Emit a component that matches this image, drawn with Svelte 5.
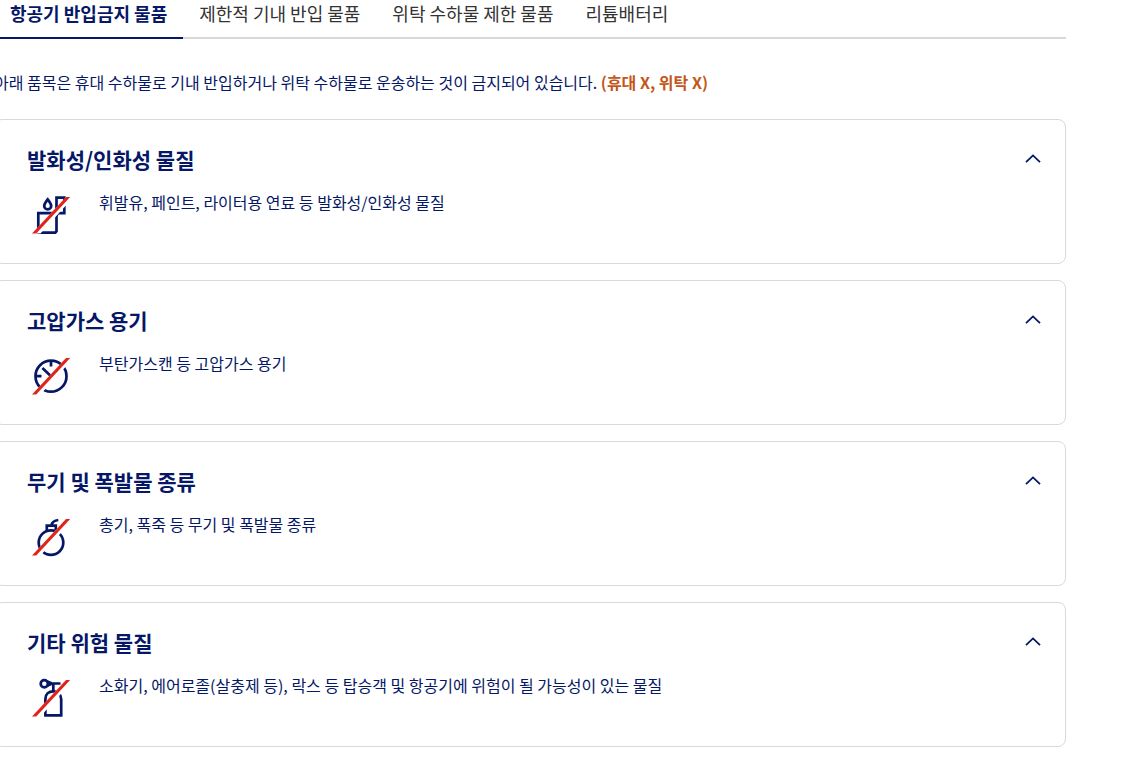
<script lang="ts">
    type Item = {
        id: string
        title: string
        text: string
        isOpen: boolean
    }

    const tabs = ['항공기 반입금지 물품', '제한적 기내 반입 물품', '위탁 수하물 제한 물품', '리튬배터리']

    let selected = 0
    let items: Item[] = [
        { id: 'flammable', title: '발화성/인화성 물질', text: '휘발유, 페인트, 라이터용 연료 등 발화성/인화성 물질', isOpen: true },
        { id: 'gas', title: '고압가스 용기', text: '부탄가스캔 등 고압가스 용기', isOpen: true },
        { id: 'weapon', title: '무기 및 폭발물 종류', text: '총기, 폭죽 등 무기 및 폭발물 종류', isOpen: true },
        { id: 'other', title: '기타 위험 물질', text: '소화기, 에어로졸(살충제 등), 락스 등 탑승객 및 항공기에 위험이 될 가능성이 있는 물질', isOpen: true }
    ]

    function toggle(id: string) {
        items = items.map(item => item.id === id ? { ...item, isOpen: !item.isOpen } : item)
    }
</script>

<main>
    <div class="tabs" role="tablist">
        {#each tabs as tab, index}
            <button type="button" role="tab" class="tab" class:active={index === selected}
                aria-selected={index === selected} on:click={() => selected = index}>{tab}</button>
        {/each}
    </div>
    <p class="intro">
        아래 품목은 휴대 수하물로 기내 반입하거나 위탁 수하물로 운송하는 것이 금지되어 있습니다.
        <strong>(휴대 X, 위탁 X)</strong>
    </p>
    <div class="cards">
        {#each items as { id, title, text, isOpen }}
            <section class="card">
                <h2>
                    <button type="button" class="header" aria-expanded={isOpen} aria-controls={id}
                        on:click={() => toggle(id)}>
                        <span>{title}</span>
                        <svg class="chevron" class:closed={!isOpen} viewBox="0 0 16 16" aria-hidden="true">
                            <path d="M1 10.2 8 3.4l7 6.8" />
                        </svg>
                    </button>
                </h2>
                {#if isOpen}
                    <div class="content" {id}>
                        <svg class="icon" viewBox="0 0 48 48" aria-hidden="true">
                            {#if id === 'flammable'}
                                <path d="M29.5 22.2H11.3v19.4h17l1.2-1.4V6.7h7.8v15.5h-6.5l-1.3 2.6" />
                                <path d="M20.7 8.4c-1.8 2.4-3.5 4.4-3.5 6.5a3.5 3.5 0 0 0 7 0c0-2.1-1.7-4.1-3.5-6.5z" />
                            {:else if id === 'gas'}
                                <circle cx="24" cy="24.2" r="15.5" />
                                <path d="M24 8.5V14.5M8.5 24.2H14.5M15.4 16 24 24.2" />
                            {:else if id === 'weapon'}
                                <circle cx="24" cy="29.6" r="12.3" />
                                <path d="M19.8 18v-5.4h9V18M24.3 12.4c.8-3.2 3-5 7-5.4" />
                            {:else}
                                <circle cx="17.3" cy="9.7" r="3.6" />
                                <path d="M20.3 11.7 25 9.5h8.5M20.3 7.6 25 9.5M26.3 9.5v8" />
                                <path d="M18.4 41.4V25c0-5 3.4-7.6 7.9-7.6s7.9 2.8 7.9 7.8v16.2z" />
                            {/if}
                            <path class="gap" d="M5.2 42.6h8.2L46.6 6h-7.5z" />
                            <path class="slash" d="M5 42.6h4.2L43.2 6H39z" />
                        </svg>
                        <p>{text}</p>
                    </div>
                {/if}
            </section>
        {/each}
    </div>
</main>

<style>
:global(body) {
    background-color: #fff;
    overflow-x: hidden;
}

main {
    --navy: #051766;
    --line: #d9d9d9;
    color: var(--navy);
    font-family: "Noto Sans CJK KR", sans-serif;
    font-size: 16px;
    line-height: 24px;
    margin: 0 63px 0 -6px;
}

button {
    background: none;
    border: none;
    color: inherit;
    cursor: pointer;
    font: inherit;
    margin: 0;
}

p, h2 {
    margin: 0;
}

.tabs {
    box-shadow: inset 0 -2px var(--line);
    display: flex;
}

.tab {
    border-bottom: 2px solid transparent;
    color: #333;
    font-size: 18px;
    padding: 1px 16px 12px;

    &.active {
        border-color: var(--navy);
        color: var(--navy);
        font-weight: 700;
    }
}

.intro {
    padding: 31px 0 25px;

    & strong {
        color: #c2571a;
    }
}

.cards {
    display: flex;
    flex-direction: column;
    gap: 16px;
}

.card {
    border: 1px solid var(--line);
    border-radius: 8px;
    padding: 24px 24px 24px 32px;
}

.header {
    display: flex;
    align-items: center;
    justify-content: space-between;
    font-size: 21px;
    font-weight: 700;
    line-height: 31px;
    padding: 0;
    text-align: left;
    width: 100%;
}

.chevron {
    fill: none;
    height: 16px;
    stroke: var(--navy);
    stroke-width: 1.8;
    width: 16px;

    &.closed {
        rotate: 180deg;
    }
}

.content {
    display: flex;
    gap: 24px;
    padding-top: 16px;

    & p {
        line-height: 22px;
    }
}

.icon {
    fill: none;
    flex: none;
    height: 48px;
    stroke: var(--navy);
    stroke-width: 2.7;
    width: 48px;
}

.gap {
    fill: #fff;
    stroke: none;
}

.slash {
    fill: #e0241b;
    stroke: none;
}
</style>
